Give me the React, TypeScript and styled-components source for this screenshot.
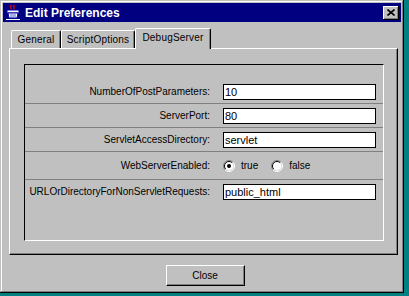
import React from "react"
import styled, { createGlobalStyle } from "styled-components"

const GlobalStyle = createGlobalStyle`
    body {
        margin: 0;
        background: #008080;
        font-family: "Liberation Sans", Arial, sans-serif;
    }
`

const Window = styled.div`
    width: 404px;
    height: 293px;
    box-sizing: border-box;
    padding: 3px;
    background: #c0c0c0;
    box-shadow: inset -1px -1px #000, inset 1px 1px #c0c0c0, inset -2px -2px #808080, inset 2px 2px #fff;
    display: flex;
    flex-direction: column;
`

const TitleBar = styled.div`
    height: 19px;
    background: #000080;
    display: flex;
    align-items: center;
    padding: 0 2px;
`

const TitleText = styled.span`
    color: #fff;
    font-weight: bold;
    font-size: 12px;
    margin-left: 4px;
`

const CloseBox = styled.div`
    margin-left: auto;
    width: 16px;
    height: 14px;
    box-sizing: border-box;
    background: #c0c0c0;
    box-shadow: inset -1px -1px #000, inset 1px 1px #fff, inset -2px -2px #808080;
    display: flex;
    align-items: center;
    justify-content: center;
`

const Body = styled.div`
    padding: 6px 3px 0 6px;
    display: flex;
    flex-direction: column;
`

const TabStrip = styled.div`
    height: 20px;
    display: flex;
    align-items: flex-end;
    padding-left: 2px;
`

const Tab = styled.div<{ selected?: boolean; w: number }>`
    width: ${(p) => p.w}px;
    height: ${(p) => (p.selected ? 21 : 18)}px;
    margin-bottom: ${(p) => (p.selected ? -1 : 0)}px;
    box-sizing: border-box;
    background: #c0c0c0;
    border-top: 1px solid #fff;
    border-left: 1px solid #fff;
    border-right: 1px solid #000;
    border-top-left-radius: 2px;
    border-top-right-radius: 2px;
    box-shadow: inset -1px 0 #808080;
    z-index: ${(p) => (p.selected ? 1 : 0)};
    font-size: 10px;
    letter-spacing: 0.2px;
    display: flex;
    justify-content: center;
    padding-top: ${(p) => (p.selected ? 3 : 3)}px;
`

const TabPanel = styled.div`
    height: 207px;
    box-sizing: border-box;
    border-top: 1px solid #fff;
    border-left: 1px solid #fff;
    border-right: 1px solid #000;
    border-bottom: 1px solid #000;
    box-shadow: inset -1px -1px #808080;
    padding: 15px 13px 0 14px;
`

const Group = styled.div`
    height: 177px;
    box-sizing: border-box;
    border-top: 1px solid #000;
    border-left: 1px solid #000;
    border-right: 1px solid #fff;
    border-bottom: 1px solid #fff;
    padding-top: 15px;
`

const Row = styled.div<{ tall?: boolean; last?: boolean }>`
    display: grid;
    grid-template-columns: 185px 153px;
    column-gap: 13px;
    align-items: center;
    height: ${(p) => (p.tall ? 27 : 23)}px;
    border-bottom: ${(p) => (p.last ? "none" : "1px solid #808080")};
`

const Label = styled.span`
    font-size: 10px;
    text-align: right;
    color: #000;
    white-space: nowrap;
`

const Field = styled.input`
    width: 153px;
    height: 16px;
    box-sizing: border-box;
    border: 1px solid #000;
    background: #fff;
    font-family: "Liberation Sans", Arial, sans-serif;
    font-size: 11px;
    padding: 0 1px;
    margin: 0;
    outline: none;
`

const RadioGroup = styled.div`
    display: flex;
    align-items: center;
`

const RadioItem = styled.span`
    display: flex;
    align-items: center;
    gap: 6px;
    font-size: 10px;
    margin-right: 13px;
`

const Footer = styled.div`
    display: flex;
    justify-content: center;
    padding: 10px 0 0 3px;
`

const Button = styled.button`
    width: 79px;
    height: 21px;
    box-sizing: border-box;
    background: #c0c0c0;
    border: 1px solid;
    border-color: #fff #000 #000 #fff;
    box-shadow: inset -1px -1px #808080;
    font-family: "Liberation Sans", Arial, sans-serif;
    font-size: 10px;
    color: #000;
    padding: 0;
`

const AppIcon = () => (
    <svg width="16" height="16" viewBox="0 0 16 16">
        <path d="M5 1 Q7 0 6 2 T7 4 M8 1 Q10 0 9 2 T10 4" stroke="#e00000" strokeWidth="1.2" fill="none" />
        <rect x="2" y="5" width="12" height="3" fill="#fff" stroke="#0000a0" strokeWidth="1" />
        <path d="M3 8 L4 13 L12 13 L13 8 Z" fill="#fff" stroke="#0000a0" strokeWidth="1" />
        <path d="M5 10 H11 M5 12 H11" stroke="#5060c0" strokeWidth="1" />
        <path d="M1 14.5 H15" stroke="#fff" strokeWidth="1" />
    </svg>
)

const CloseGlyph = () => (
    <svg width="8" height="7" viewBox="0 0 8 7">
        <path d="M0.5 0.5 L7.5 6.5 M7.5 0.5 L0.5 6.5" stroke="#000" strokeWidth="1.6" />
    </svg>
)

const Radio = ({ checked }: { checked?: boolean }) => (
    <svg width="12" height="12" viewBox="0 0 12 12">
        <circle cx="6" cy="6" r="5" fill="#fff" />
        <path d="M9.9 2.1 A5.5 5.5 0 0 0 2.1 9.9" stroke="#808080" fill="none" />
        <path d="M2.1 9.9 A5.5 5.5 0 0 0 9.9 2.1" stroke="#fff" fill="none" />
        <path d="M9.2 2.8 A4.5 4.5 0 0 0 2.8 9.2" stroke="#000" fill="none" />
        <path d="M2.8 9.2 A4.5 4.5 0 0 0 9.2 2.8" stroke="#dfdfdf" fill="none" />
        {checked && <circle cx="6" cy="6" r="2" fill="#000" />}
    </svg>
)

const fields = [
    { label: "NumberOfPostParameters:", value: "10" },
    { label: "ServerPort:", value: "80" },
    { label: "ServletAccessDirectory:", value: "servlet" },
]

export default function App() {
    return (
        <>
            <GlobalStyle />
            <Window>
                <TitleBar>
                    <AppIcon />
                    <TitleText>Edit Preferences</TitleText>
                    <CloseBox>
                        <CloseGlyph />
                    </CloseBox>
                </TitleBar>
                <Body>
                    <TabStrip>
                        <Tab w={50}>General</Tab>
                        <Tab w={74}>ScriptOptions</Tab>
                        <Tab w={76} selected>DebugServer</Tab>
                    </TabStrip>
                    <TabPanel>
                        <Group>
                            {fields.map((f) => (
                                <Row key={f.label}>
                                    <Label>{f.label}</Label>
                                    <Field readOnly defaultValue={f.value} />
                                </Row>
                            ))}
                            <Row tall>
                                <Label>WebServerEnabled:</Label>
                                <RadioGroup>
                                    <RadioItem><Radio checked />true</RadioItem>
                                    <RadioItem><Radio />false</RadioItem>
                                </RadioGroup>
                            </Row>
                            <Row last>
                                <Label>URLOrDirectoryForNonServletRequests:</Label>
                                <Field readOnly defaultValue="public_html" />
                            </Row>
                        </Group>
                    </TabPanel>
                    <Footer>
                        <Button>Close</Button>
                    </Footer>
                </Body>
            </Window>
        </>
    )
}
